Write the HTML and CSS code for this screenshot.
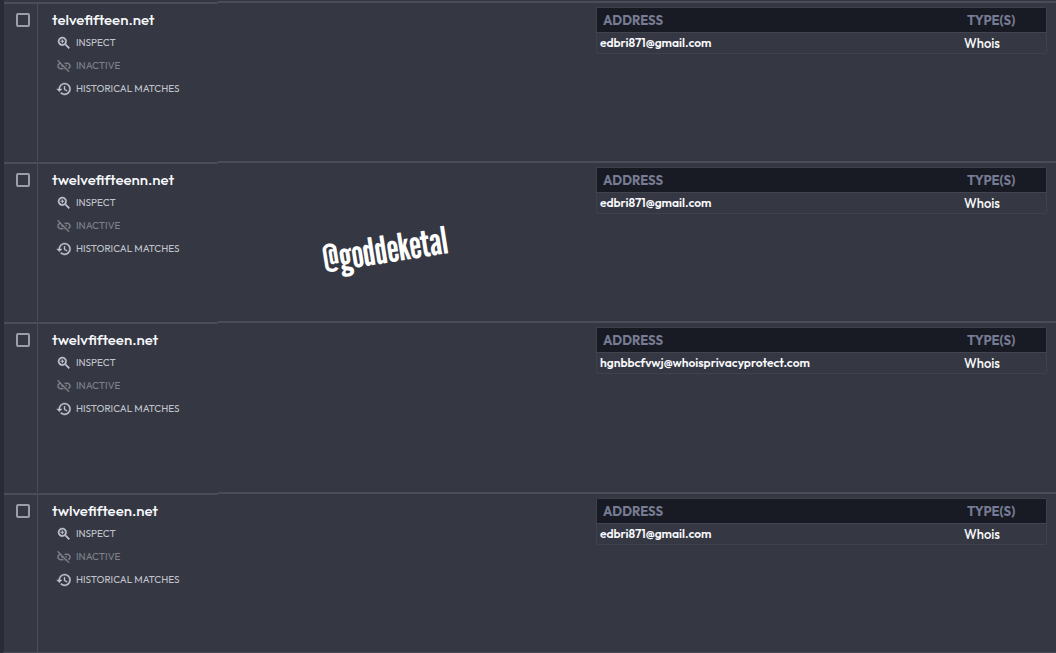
FILE: index.html
```html
<!DOCTYPE html>
<html lang="en">
<head>
    <meta charset="UTF-8">
    <meta name="viewport" content="width=device-width, initial-scale=1.0">
    <title>Domain Matches</title>
    <link rel="stylesheet" href="styles.css">
</head>
<body>
    <svg class="sprite" aria-hidden="true">
        <symbol id="icon-inspect" viewBox="0 0 24 24">
            <path d="M15.5 14h-.79l-.28-.27A6.47 6.47 0 0 0 16 9.5 6.5 6.5 0 1 0 9.5 16c1.61 0 3.09-.59 4.23-1.57l.27.28v.79l5 4.99L20.49 19l-4.99-5zm-6 0C7.01 14 5 11.99 5 9.5S7.01 5 9.5 5 14 7.01 14 9.5 11.99 14 9.5 14z" stroke="currentColor" stroke-width=".7"/>
            <path d="M8.7 6.8h1.6v1.9h1.9v1.6h-1.9v1.9H8.7v-1.9H6.8V8.7h1.9z"/>
        </symbol>
        <symbol id="icon-inactive" viewBox="0 0 24 24">
            <path d="M17 7h-4v1.9h4c1.71 0 3.1 1.39 3.1 3.1 0 1.43-.98 2.63-2.31 2.98l1.46 1.46C20.88 15.61 22 13.95 22 12c0-2.76-2.24-5-5-5zm-1 4h-2.19l2 2H16v-2zM2 4.27l3.11 3.11C3.29 8.12 2 9.91 2 12c0 2.76 2.24 5 5 5h4v-1.9H7c-1.71 0-3.1-1.39-3.1-3.1 0-1.59 1.21-2.9 2.76-3.07L8.73 11H8v2h2.73L13 15.27V17h1.73l4.01 4L20 19.74 3.27 3 2 4.27z" stroke="currentColor" stroke-width=".4"/>
        </symbol>
        <symbol id="icon-history" viewBox="0 0 24 24">
            <path d="M13 3a9 9 0 0 0-9 9H1l3.89 3.89.07.14L9 12H6c0-3.87 3.13-7 7-7s7 3.13 7 7-3.13 7-7 7c-1.93 0-3.68-.79-4.94-2.06l-1.42 1.42A8.95 8.95 0 0 0 13 21a9 9 0 0 0 0-18zm-1 5v5l4.28 2.54.72-1.21-3.5-2.08V8H12z" stroke="currentColor" stroke-width=".6"/>
        </symbol>
    </svg>

    <main class="results">
        <section class="result">
            <div class="select-cell"><input type="checkbox" class="checkbox" aria-label="Select telvefifteen.net"></div>
            <div class="domain-cell">
                <h2 class="domain">telvefifteen.net</h2>
                <a href="#" class="action"><svg class="icon"><use href="#icon-inspect"/></svg>INSPECT</a>
                <a href="#" class="action inactive"><svg class="icon"><use href="#icon-inactive"/></svg>INACTIVE</a>
                <a href="#" class="action"><svg class="icon"><use href="#icon-history"/></svg>HISTORICAL MATCHES</a>
            </div>
            <div class="email-cell">
                <table class="emails">
                    <thead><tr><th>ADDRESS</th><th class="type">TYPE(S)</th></tr></thead>
                    <tbody><tr><td>edbri871@gmail.com</td><td class="source">Whois</td></tr></tbody>
                </table>
            </div>
        </section>

        <section class="result">
            <div class="select-cell"><input type="checkbox" class="checkbox" aria-label="Select twelvefifteenn.net"></div>
            <div class="domain-cell">
                <h2 class="domain">twelvefifteenn.net</h2>
                <a href="#" class="action"><svg class="icon"><use href="#icon-inspect"/></svg>INSPECT</a>
                <a href="#" class="action inactive"><svg class="icon"><use href="#icon-inactive"/></svg>INACTIVE</a>
                <a href="#" class="action"><svg class="icon"><use href="#icon-history"/></svg>HISTORICAL MATCHES</a>
            </div>
            <div class="email-cell">
                <table class="emails">
                    <thead><tr><th>ADDRESS</th><th class="type">TYPE(S)</th></tr></thead>
                    <tbody><tr><td>edbri871@gmail.com</td><td class="source">Whois</td></tr></tbody>
                </table>
            </div>
        </section>

        <section class="result tall">
            <div class="select-cell"><input type="checkbox" class="checkbox" aria-label="Select twelvfifteen.net"></div>
            <div class="domain-cell">
                <h2 class="domain">twelvfifteen.net</h2>
                <a href="#" class="action"><svg class="icon"><use href="#icon-inspect"/></svg>INSPECT</a>
                <a href="#" class="action inactive"><svg class="icon"><use href="#icon-inactive"/></svg>INACTIVE</a>
                <a href="#" class="action"><svg class="icon"><use href="#icon-history"/></svg>HISTORICAL MATCHES</a>
            </div>
            <div class="email-cell">
                <table class="emails">
                    <thead><tr><th>ADDRESS</th><th class="type">TYPE(S)</th></tr></thead>
                    <tbody><tr><td>hgnbbcfvwj@whoisprivacyprotect.com</td><td class="source">Whois</td></tr></tbody>
                </table>
            </div>
        </section>

        <section class="result">
            <div class="select-cell"><input type="checkbox" class="checkbox" aria-label="Select twlvefifteen.net"></div>
            <div class="domain-cell">
                <h2 class="domain">twlvefifteen.net</h2>
                <a href="#" class="action"><svg class="icon"><use href="#icon-inspect"/></svg>INSPECT</a>
                <a href="#" class="action inactive"><svg class="icon"><use href="#icon-inactive"/></svg>INACTIVE</a>
                <a href="#" class="action"><svg class="icon"><use href="#icon-history"/></svg>HISTORICAL MATCHES</a>
            </div>
            <div class="email-cell">
                <table class="emails">
                    <thead><tr><th>ADDRESS</th><th class="type">TYPE(S)</th></tr></thead>
                    <tbody><tr><td>edbri871@gmail.com</td><td class="source">Whois</td></tr></tbody>
                </table>
            </div>
        </section>
    </main>
    <div class="watermark">@goddeketal</div>
</body>
</html>
```
FILE: styles.css
```css
* {
    box-sizing: border-box;
}

body {
    margin: 0;
    position: relative;
    font-family: "Outfit", "Lato", sans-serif;
    background-color: #353842;
    color: #f8f9fc;
}

.sprite {
    display: none;
}

.results {
    padding-top: 1px;
    border-left: 4px solid #292c36;
    border-bottom: 2px solid #484b55;
}

.result {
    display: grid;
    grid-template-columns: 34px 180px 1fr;
    min-height: 160px;
}

.result.tall {
    min-height: 171px;
}

.select-cell, .domain-cell, .email-cell {
    border-top: 2px solid #4a4d57;
}

.select-cell, .domain-cell {
    margin-top: 1px;
}

.select-cell {
    padding: 9px 0 0 12px;
    border-right: 1px solid #4b4e58;
}

.checkbox {
    display: block;
    appearance: none;
    width: 14px;
    height: 14px;
    margin: 0;
    border: 2px solid #9c9ea9;
    border-radius: 2px;
}

.checkbox:checked {
    background-color: #9c9ea9;
}

.domain-cell {
    display: flex;
    flex-direction: column;
    align-items: flex-start;
    padding: 5px 0 0 14px;
}

.domain {
    margin: 0 0 1px;
    font-size: 15px;
    font-weight: 500;
    line-height: 21px;
}

.action {
    display: flex;
    align-items: center;
    gap: 4px;
    height: 23px;
    padding-left: 4px;
    font-size: 10px;
    color: #c2c4cd;
    text-decoration: none;
    white-space: nowrap;
}

.action.inactive {
    color: #7f828d;
}

.icon {
    width: 16px;
    height: 16px;
    fill: currentColor;
}

.email-cell {
    display: flex;
    justify-content: flex-end;
    align-items: flex-start;
    padding: 4px 9px 0 0;
}

.emails {
    width: 451px;
    table-layout: fixed;
    border: 1px solid #3f424d;
    border-radius: 2px;
    border-spacing: 0;
    font-size: 12px;
    text-align: left;
}

.emails th {
    height: 25px;
    padding: 0 6px 1px;
    border-bottom: 1px solid #424550;
    background-color: #181b23;
    color: #777c94;
    font-size: 13px;
    font-weight: 700;
}

.emails .type {
    width: 85px;
}

.emails td {
    height: 20px;
    padding: 0 3px;
    font-weight: 600;
    line-height: 16px;
}

.emails .source {
    font-size: 13px;
    font-weight: 500;
}

.watermark {
    position: absolute;
    top: 229px;
    left: 322px;
    font-family: "League Gothic", "Liberation Sans Narrow", sans-serif;
    font-size: 38px;
    font-weight: 400;
    line-height: 40px;
    color: #fff;
    transform: rotate(-9deg);
}
```
